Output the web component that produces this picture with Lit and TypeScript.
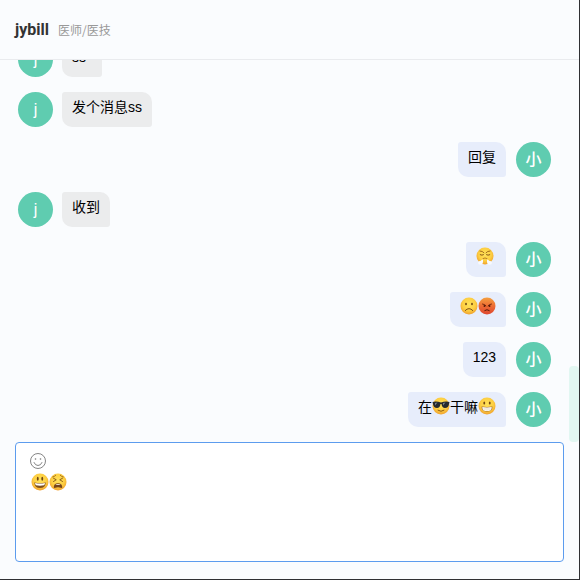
import { LitElement, html, css, svg, TemplateResult } from "lit";
import { customElement, property } from "lit/decorators.js";
import { classMap } from "lit/directives/class-map.js";

type Part = string | { emoji: string };
interface Message {
  mine: boolean;
  parts: Part[];
}

const yellowFill = "url(#yellow)";
const EMOJI: Record<string, { label: string; fill: string; art: TemplateResult }> = {
  triumph: {
    label: "😤",
    fill: yellowFill,
    art: svg`
      <path d="M8 8q5 0 8 3.500M28 8q-5 0-8 3.500" fill="none" stroke="#8a5212" stroke-width="1.600" stroke-linecap="round"/>
      <path d="M8.500 15.500q3.500 2 6.500 0M21 15.500q3 2 6.500 0" fill="none" stroke="#7a4a12" stroke-width="1.800" stroke-linecap="round"/>
      <path d="M14 23q4-2.500 8 0" fill="none" stroke="#9a5c14" stroke-width="1.400" stroke-linecap="round"/>
      <path d="M14 25q-3 0-5 3-5-1-5 3.500 0 4 5 4 6 0 5-10.500zM22 25q3 0 5 3 5-1 5 3.500 0 4-5 4-6 0-5-10.500z" fill="#f7f9fd"/>`,
  },
  frown: {
    label: "☹️",
    fill: yellowFill,
    art: svg`
      <ellipse cx="12" cy="14" rx="1.900" ry="2.500" fill="#7a4f16"/>
      <ellipse cx="24" cy="14" rx="1.900" ry="2.500" fill="#7a4f16"/>
      <path d="M10.500 27q7.500-8 15 0" fill="none" stroke="#80521a" stroke-width="2" stroke-linecap="round"/>`,
  },
  rage: {
    label: "😡",
    fill: "url(#red)",
    art: svg`
      <path d="M9 14q5 .5 7 3.500M27 14q-5 .5-7 3.500" fill="none" stroke="#6b2209" stroke-width="1.800" stroke-linecap="round"/>
      <circle cx="13" cy="18" r="2" fill="#54190a"/>
      <circle cx="23" cy="18" r="2" fill="#54190a"/>
      <path d="M13.500 27q4.500-3.500 9 0" fill="none" stroke="#54190a" stroke-width="2" stroke-linecap="round"/>`,
  },
  cool: {
    label: "😎",
    fill: yellowFill,
    art: svg`
      <path d="M1 10q8-2 17 1 9-3 17-1l-1 4q-1 8-8 8-6 0-7-8h-2q-1 8-7 8-7 0-8-8z" fill="#262a2e"/>
      <path d="M6 12l5-1-5 6zM22 12l5-1-5 6z" fill="#76818b"/>
      <path d="M12 26.500q6 4.500 12 0" fill="none" stroke="#8a5212" stroke-width="1.900" stroke-linecap="round"/>`,
  },
  grin: {
    label: "😀",
    fill: yellowFill,
    art: svg`
      <ellipse cx="12.500" cy="12" rx="1.900" ry="3" fill="#704512"/>
      <ellipse cx="23.500" cy="12" rx="1.900" ry="3" fill="#704512"/>
      <path d="M7 19q11 1.500 22 0 0 10-11 10T7 19z" fill="#9b6528"/>
      <path d="M8.500 20q9.500 1.500 19 0 0 6-2.500 7-7 2-14 0-2.500-1-2.500-7z" fill="#fdfaf2"/>
      <path d="M9 24h18M14 21v6M18 21v7M22 21v6" stroke="#d9cdb8" stroke-width=".7"/>`,
  },
  smiley: {
    label: "😃",
    fill: yellowFill,
    art: svg`
      <ellipse cx="13.500" cy="11.500" rx="1.900" ry="3.800" fill="#704512"/>
      <ellipse cx="22.500" cy="11.500" rx="1.900" ry="3.800" fill="#704512"/>
      <path d="M6.500 19q11.500 2 23 0-1 11-11.500 11T6.500 19z" fill="#80501c"/>
      <path d="M8 20q10 2 20 0-.5 4-2 4.500-8 1.500-16 0-1.500-.5-2-4.500z" fill="#fff"/>`,
  },
  tired: {
    label: "😫",
    fill: yellowFill,
    art: svg`
      <path d="M7.500 8q3.500-.5 6-3.500M28.500 8q-3.500-.5-6-3.500" fill="none" stroke="#8a5212" stroke-width="1.500" stroke-linecap="round"/>
      <path d="M9 10.500l5.500 3-5.500 3.500M27 10.500l-5.500 3 5.500 3.500" fill="none" stroke="#7a4a12" stroke-width="1.700" stroke-linecap="round" stroke-linejoin="round"/>
      <path d="M9.500 29q0-8.500 8.500-8.500t8.500 8.500q-1 1.500-3 .5-5.500-2.500-11 0-2 1-3-.5z" fill="#77461a"/>
      <path d="M13 23q5-2.500 10 0l-1 1h-8z" fill="#f2e8d6"/>`,
  },
};

const MESSAGES: Message[] = [
  { mine: false, parts: ["ss"] },
  { mine: false, parts: ["发个消息ss"] },
  { mine: true, parts: ["回复"] },
  { mine: false, parts: ["收到"] },
  { mine: true, parts: [{ emoji: "triumph" }] },
  { mine: true, parts: [{ emoji: "frown" }, { emoji: "rage" }] },
  { mine: true, parts: ["123"] },
  { mine: true, parts: ["在", { emoji: "cool" }, "干嘛", { emoji: "grin" }] },
];

@customElement("emoji-face")
class EmojiFace extends LitElement {
  @property() name = "grin";

  static styles = css`
    :host {
      display: inline-block;
      width: 18px;
      height: 18px;
      flex: none;
    }
    svg {
      display: block;
      width: 100%;
      height: 100%;
    }
  `;

  render() {
    const face = EMOJI[this.name];
    return html`<svg viewBox="0 0 36 36" role="img" aria-label=${face.label}>
      <defs>
        <radialGradient id="yellow" cx=".5" cy=".4" r=".62">
          <stop offset="0" stop-color="#ffe25a" />
          <stop offset=".6" stop-color="#fdcf42" />
          <stop offset="1" stop-color="#ee9c2c" />
        </radialGradient>
        <linearGradient id="red" x1="0" y1="0" x2="0" y2="1">
          <stop offset="0" stop-color="#f5a040" />
          <stop offset=".5" stop-color="#ed6c33" />
          <stop offset="1" stop-color="#de4630" />
        </linearGradient>
      </defs>
      <circle cx="18" cy="18" r="17" fill=${face.fill} />
      ${face.art}
    </svg>`;
  }
}

@customElement("chat-message")
class ChatMessage extends LitElement {
  @property({ type: Boolean }) mine = false;
  @property({ attribute: false }) parts: Part[] = [];

  static styles = css`
    :host {
      display: block;
      flex: none;
    }
    .row {
      display: flex;
      gap: 9px;
    }
    .row.mine {
      flex-direction: row-reverse;
      gap: 10px;
    }
    .avatar {
      flex: none;
      width: 35px;
      height: 35px;
      border-radius: 50%;
      background: #5fccb0;
      color: #fff;
      font-size: 16px;
      font-weight: 500;
      line-height: 35px;
      text-align: center;
    }
    .bubble {
      display: flex;
      box-sizing: border-box;
      min-width: 40px;
      min-height: 35px;
      padding: 5px 10px 10px;
      border-radius: 3px 10px 3px 10px;
      background: #ebeced;
      color: #000;
      font-size: 14px;
      line-height: 20px;
    }
    .mine .bubble {
      background: #e7edfb;
    }
  `;

  render() {
    return html`<div class=${classMap({ row: true, mine: this.mine })}>
      <div class="avatar">${this.mine ? "小" : "j"}</div>
      <div class="bubble">
        ${this.parts.map((p) =>
          typeof p === "string" ? html`<span>${p}</span>` : html`<emoji-face name=${p.emoji}></emoji-face>`
        )}
      </div>
    </div>`;
  }
}

@customElement("app-root")
class AppRoot extends LitElement {
  static styles = css`
    :host {
      display: flex;
      flex-direction: column;
      box-sizing: border-box;
      height: 100vh;
      border-right: 1px solid #2f3033;
      border-bottom: 1px solid #2f3033;
      background: #fafcfe;
      font-family: "Liberation Sans", "Noto Sans CJK SC", sans-serif;
    }
    .header {
      display: flex;
      align-items: center;
      gap: 9px;
      flex: none;
      height: 59px;
      padding: 0 15px;
      border-bottom: 1px solid #e9ebee;
    }
    .name {
      margin: 0;
      color: #333;
      font-family: Roboto, "Noto Sans CJK SC", sans-serif;
      font-size: 16px;
      font-weight: 700;
      line-height: 20px;
    }
    .role {
      color: #999;
      font-family: "Noto Sans CJK SC", sans-serif;
      font-size: 12px;
      line-height: 20px;
    }
    .history {
      display: flex;
      flex: 1;
      min-height: 0;
      overflow: hidden;
    }
    .messages {
      display: flex;
      flex: 1;
      flex-direction: column;
      justify-content: flex-end;
      gap: 15px;
      padding: 0 18px 15px;
    }
    .track {
      display: flex;
      flex: none;
      flex-direction: column;
      justify-content: flex-end;
      width: 10px;
    }
    .thumb {
      height: 20%;
      border-radius: 4px;
      background: #e2f7f2;
    }
    .editor {
      box-sizing: border-box;
      flex: none;
      height: 120px;
      margin: 0 15px 17px;
      padding: 10px 14px;
      border: 1px solid #5c9cee;
      border-radius: 4px;
      background: #fff;
    }
    .picker {
      display: block;
      width: 16px;
      height: 16px;
      padding: 0;
      border: 0;
      background: none;
      color: #777;
      cursor: pointer;
    }
    .picker svg {
      display: block;
    }
    .draft {
      display: flex;
      padding: 4px 1px 0;
    }
    .input {
      flex: 1;
      min-width: 0;
      height: 72px;
      padding: 0;
      border: 0;
      outline: 0;
      resize: none;
      background: none;
      color: #000;
      font: 14px/20px "Liberation Sans", "Noto Sans CJK SC", sans-serif;
    }
  `;

  render() {
    return html`
      <header class="header">
        <h1 class="name">jybill</h1>
        <span class="role">医师/医技</span>
      </header>
      <div class="history">
        <div class="messages">
          ${MESSAGES.map((m) => html`<chat-message ?mine=${m.mine} .parts=${m.parts}></chat-message>`)}
        </div>
        <div class="track"><div class="thumb"></div></div>
      </div>
      <div class="editor">
        <button class="picker" type="button" aria-label="表情">
          <svg width="16" height="16" viewBox="0 0 16 16" fill="none" stroke="currentColor">
            <circle cx="8" cy="8" r="7.500" stroke-width=".9" />
            <path d="M4 9.500q1.200 3 4 3t4-3" stroke-width=".9" stroke-linecap="round" />
            <circle cx="5.500" cy="6" r=".8" fill="currentColor" stroke="none" />
            <circle cx="10.500" cy="6" r=".8" fill="currentColor" stroke="none" />
          </svg>
        </button>
        <div class="draft">
          <emoji-face name="smiley"></emoji-face>
          <emoji-face name="tired"></emoji-face>
          <textarea class="input" aria-label="消息"></textarea>
        </div>
      </div>
    `;
  }
}
